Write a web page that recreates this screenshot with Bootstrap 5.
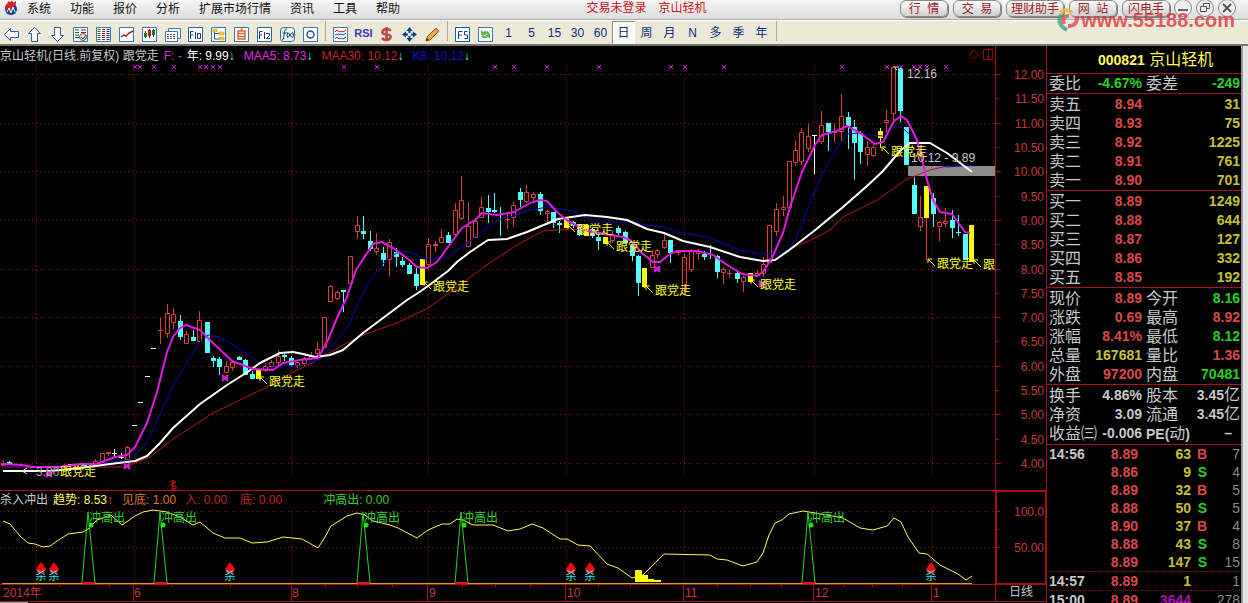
<!DOCTYPE html>
<html lang="zh-CN">
<head>
<meta charset="utf-8">
<meta name="viewport" content="width=device-width, initial-scale=1">
<title>京山轻机 000821</title>
<link href="https://cdn.jsdelivr.net/npm/bootstrap@5.3.0/dist/css/bootstrap.min.css" rel="stylesheet">
<style>
body{font-family:"Liberation Sans","Noto Sans CJK SC",sans-serif;font-size:12px;line-height:16px;background:#000;color:#c8c8c8}
.menubar{height:20px;background:linear-gradient(#f6f6f6,#dcdcdc);border-bottom:1px solid #aaa;padding:0 10px 2px 4px}
.menubar nav{gap:19px;margin-left:8px}
.menubar nav a{color:#111}
.login{left:47%;gap:12px;top:0}
.login a{color:#c8141c}
.pills{gap:5px;margin-right:2px}
.pill{height:17px;min-width:48px;border:1px solid #8c8c8c;border-radius:6px;background:linear-gradient(#fdfdfd,#cfcfcf);color:#9c1c24;font-size:12px;line-height:14px;padding:0 4px;box-shadow:1px 1px 0 #777;white-space:pre}
.winbtn{width:22px;height:19px;padding:0;border:0;background:none;line-height:0}
.toolbar{height:26px;background:#ece9d8;border-top:1px solid #fff;border-bottom:2px solid #77766c}
.tool{width:23px;height:23px;border:0;background:none;padding:0;color:#0c2c80;font-size:12px;line-height:22px;text-align:center}
.tool svg{display:block;margin:3px auto 0}
.tool.pressed{background:#fbfaf6;border:1px solid;border-color:#908d7c #fff #fff #908d7c}
.tool.rsi{color:#3838c0;font-size:11px;font-weight:700}
.rule{width:8px;height:20px;border-left:1px solid #aaa792;margin-left:3px;margin-right:-4px}
.mark-site{right:13px;top:6px;color:rgba(222,50,55,.8);font-size:20px;line-height:28px;z-index:5;pointer-events:none}
.legend{gap:9px;white-space:nowrap;line-height:16px}
.legend .near{margin-left:-4px}
.cy{color:#54fcfc}.wh{color:#fff}.mg{color:#e428e4}.rd{color:#c02424}.bl{color:#1414c8}.yl{color:#fcfc54}.gn{color:#30d030}.og{color:#e07830}
.side{width:195px;border-left:1px solid #a81414}
.edge{width:7px;background:#e4e4e4;border-left:2px solid #999}
.side h1{height:28px;font-size:16px;line-height:27px;color:#fcfc54;border-bottom:1px solid #a81414;padding-left:51px}
.side h1 b{font-size:14px}
.quote{width:191px;table-layout:fixed;margin-left:2px;font-size:16px;line-height:19px;color:#c8c8c8;border-collapse:collapse}
.quote th{font-weight:400;padding:0;height:19px;white-space:nowrap}
.quote td{padding:0;height:19px;font-size:14px;font-weight:700;text-align:right;white-space:nowrap}
.quote td.kj{font-weight:400;font-size:16px;text-align:left}
.quote td b{font-size:14px}
.quote td b,.quote td span{line-height:14px}
.quote.ticks,.quote.ticks td,.quote.ticks th{height:18px;line-height:18px;font-size:14px}
.quote.ticks th{font-weight:700}
.quote.ticks tr.dots>*{border-top:1px dotted #8c1414}
.group{border-bottom:1px solid #a81414}
.group+.group{padding-top:1px}
.group.fund{padding-bottom:1px}
.up{color:#dc4848}.dn{color:#28d028}.vol{color:#c4c030}.ct{color:#888!important;font-weight:400!important}.big{color:#b010b0}
.chart svg{display:block;width:100%;height:auto}
svg text{font-family:"Liberation Sans","Noto Sans CJK SC",sans-serif;font-size:12px}
</style>
</head>
<body class="vh-100 overflow-hidden d-flex flex-column position-relative">

<header class="menubar d-flex align-items-center flex-shrink-0 position-relative">
  <svg width="15" height="18" viewBox="0 0 15 18"><circle cx="7" cy="9" r="6" fill="#143c9c"/><path d="M1 9a6 6 0 0 1 9-6l2 2-4 2 3 2-5 2-1-3z" fill="#e02020"/><path d="M3 3l2-2 1 2 2-3 1 3 3-2v3z" fill="#e02020"/><path d="M3 12l2-4 2 5 2-6 2 5" stroke="#fff" fill="none"/></svg>
  <nav class="d-flex">
    <a class="text-decoration-none" href="#">系统</a><a class="text-decoration-none" href="#">功能</a><a class="text-decoration-none" href="#">报价</a><a class="text-decoration-none" href="#">分析</a><a class="text-decoration-none" href="#">扩展市场行情</a><a class="text-decoration-none" href="#">资讯</a><a class="text-decoration-none" href="#">工具</a><a class="text-decoration-none" href="#">帮助</a>
  </nav>
  <div class="login position-absolute d-flex"><a class="text-decoration-none" href="#">交易未登录</a><a class="text-decoration-none" href="#">京山轻机</a></div>
  <div class="pills ms-auto d-flex align-items-center">
    <button class="pill">行  情</button><button class="pill">交  易</button><button class="pill">理财助手</button><button class="pill">网  站</button><button class="pill">闪电手</button>
  </div>
  <div class="d-flex">
    <button class="winbtn" aria-label="最小化"><svg width="20" height="19"><circle cx="10" cy="9" r="8.500" fill="#eee" stroke="#888"/><path d="M5 11h10" stroke="#666" stroke-width="2"/></svg></button>
    <button class="winbtn" aria-label="还原"><svg width="20" height="19"><circle cx="10" cy="9" r="8.500" fill="#eee" stroke="#888"/><path d="M8.500 7.500v-3h6v5h-3M5.500 7.500h6v5h-6z" fill="none" stroke="#555"/></svg></button>
    <button class="winbtn" aria-label="关闭"><svg width="20" height="19"><circle cx="10" cy="9" r="8.500" fill="#eee" stroke="#888"/><path d="M6 5l8 8M14 5l-8 8" stroke="#555" stroke-width="2"/></svg></button>
  </div>
</header>

<div class="toolbar d-flex flex-shrink-0" role="toolbar">
  <button class="tool" aria-label="后退"><svg width="17" height="17"><path d="M1.500 8.500l6-6v3h8v6h-8v3z" fill="#fff" stroke="#2c5ca8"/></svg></button>
  <button class="tool" aria-label="上"><svg width="17" height="17"><path d="M8.500 1.500l6 6h-3v8h-6v-8h-3z" fill="#fff" stroke="#2c5ca8"/></svg></button>
  <button class="tool" aria-label="下"><svg width="17" height="17"><path d="M8.500 15.500l6-6h-3v-8h-6v8h-3z" fill="#fff" stroke="#2c5ca8"/></svg></button>
  <button class="tool" aria-label="报告"><svg width="17" height="17"><path d="M1.500 1.500h14v14h-14z" fill="#fff" stroke="#3c78b8"/><path d="M3 4h4M3 6.500h4M3 9h4" stroke="#086808"/><path d="M9 4h5M9 6.500h5" stroke="#a01818"/><path d="M3 11.500h4" stroke="#444"/><circle cx="11" cy="11" r="3.500" fill="#ddd" stroke="#666"/><path d="M9 11l2 2 3-4" stroke="#555" fill="none"/></svg></button>
  <button class="tool" aria-label="列表"><svg width="17" height="17"><path d="M1.500 1.500h14v14h-14z" fill="#fff" stroke="#3c78b8"/><path d="M4 3v12" stroke="#067006" stroke-width="3" stroke-dasharray="1 1"/><path d="M8.500 3v12" stroke="#c01010" stroke-width="3" stroke-dasharray="1 1"/><path d="M13 3v12" stroke="#103090" stroke-width="3" stroke-dasharray="1 1"/></svg></button>
  <button class="tool" aria-label="分时"><svg width="17" height="17"><path d="M1.500 1.500h14v14h-14z" fill="#fff" stroke="#3c78b8"/><path d="M3 11l3-2 2 1 3-3 4-2" fill="none" stroke="#c01818" stroke-width="1.500"/></svg></button>
  <button class="tool" aria-label="K线"><svg width="17" height="17"><path d="M1.500 1.500h14v14h-14z" fill="#fff" stroke="#3c78b8"/><path d="M4.500 5v7M8.500 3v9M12.500 3v8" stroke="#333"/><path d="M3 7h3v4H3z" fill="#108010"/><path d="M7 4h3v6H7z" fill="#d01010"/><path d="M11 4h3v5h-3z" fill="#108010"/></svg></button>
  <button class="tool" aria-label="窗口"><svg width="17" height="17"><path d="M4.500 2.500h12v10h-12z" fill="#fff" stroke="#3c78b8"/><path d="M1.500 5.500h12v10h-12z" fill="#fff" stroke="#3c78b8"/><path d="M3 8.500h9M3 10.500h9M3 12.500h9" stroke="#555" stroke-dasharray="2 1"/></svg></button>
  <button class="tool" aria-label="F10"><svg width="17" height="17"><path d="M1.500 1.500h14v14h-14z" fill="#fff" stroke="#2c64a8"/><path d="M3.500 13V5.500h3M3.500 9H6M8.500 6v7M10.500 7.500h3v5h-3z" fill="none" stroke="#1c3c94"/></svg></button>
  <button class="tool" aria-label="树"><svg width="17" height="17"><path d="M1.500 1.500h14v14h-14z" fill="#fff" stroke="#3c78b8"/><path d="M4.500 5v8h6M4 7.500h6" fill="none" stroke="#2c5ca8"/><path d="M3 3h4v3H3zM9 6h5v3H9zM9 11h5v3H9z" fill="#f4c840" stroke="#c88c20" stroke-width=".5"/></svg></button>
  <button class="tool" aria-label="自选"><svg width="17" height="17"><path d="M1.500 1.500h14v14h-14z" fill="#fff" stroke="#3c78b8"/><path d="M5 5h7v8H5zM5 7.500h7M5 10.500h7M9 2L8 5" fill="none" stroke="#e06828" stroke-width="1.500"/></svg></button>
  <button class="tool" aria-label="F12"><svg width="17" height="17"><path d="M1.500 1.500h14v14h-14z" fill="#fff" stroke="#2c64a8"/><path d="M3.500 13V5.500h3M3.500 9H6M8.500 6v7M10 7.500h3.500v2L10.500 12.500H14" fill="none" stroke="#1c3c94"/></svg></button>
  <button class="tool" aria-label="公式"><svg width="17" height="17"><rect x="1.500" y="1.500" width="14" height="14" rx="3" fill="#eef6f4" stroke="#2c7878"/><path d="M8 3q-2-1-2.500 3l-1 7q-.5 1-1.500 0M3.500 7h4M9 6q-2 3 0 6M13.500 6q2 3 0 6M9.500 7l3 4M12.500 7l-3 4" fill="none" stroke="#1c4878"/></svg></button>
  <button class="tool" aria-label="圆"><svg width="17" height="17"><path d="M1.500 1.500h14v14h-14z" fill="#fff" stroke="#3c78b8"/><circle cx="8.500" cy="8.500" r="3.500" fill="none" stroke="#1c5c94" stroke-width="1.500"/></svg></button>
  <span class="rule"></span>
  <button class="tool" aria-label="叠加"><svg width="17" height="17"><path d="M1.500 1.500h14v14h-14z" fill="#fff" stroke="#3c78b8"/><path d="M3 6l2-2 2 2 2-1 2 1 3-2" fill="none" stroke="#c01818"/><path d="M3 9l2-1 2 1 2-1 2 1 3-2M3 13l2-2 2 2 2-1 2 1 3-2" fill="none" stroke="#2848a8"/></svg></button>
  <button class="tool rsi">RSI</button>
  <button class="tool" aria-label="资金"><svg width="17" height="17"><path d="M12.500 5q-1-2-4-2t-4 2.500 4 3 4 3-4 2.500-4.500-2M8.500 1v14" fill="none" stroke="#b84840" stroke-width="2.500"/></svg></button>
  <button class="tool" aria-label="移动"><svg width="17" height="17"><path d="M8.500 1l3 4h-6zM8.500 16l3-4h-6zM1 8.500l4-3v6zM16 8.500l-4-3v6z" fill="#0c3c94"/><path d="M8.500 4v9M4 8.500h9" stroke="#0c3c94" stroke-width="2"/><path d="M7 7h3v3H7z" fill="#e8eefc"/></svg></button>
  <button class="tool" aria-label="画线"><svg width="17" height="17"><path d="M2 15l1-4L12 2l3 3-9 9z" fill="#f0a840" stroke="#905818"/><path d="M11 3l1-1 3 3-1 1z" fill="#e87878"/><path d="M2 15l1-3 2 2z" fill="#333"/></svg></button>
  <span class="rule"></span>
  <button class="tool" aria-label="F5"><svg width="17" height="17"><path d="M1.500 1.500h14v14h-14z" fill="#fff" stroke="#0c64a8"/><path d="M4.500 13V5.500h4M4.500 9H8M13.500 5.500h-3V9h3v3.500h-3" fill="none" stroke="#1c3c94"/></svg></button>
  <button class="tool" aria-label="刷新"><svg width="17" height="17"><path d="M1.500 1.500h14v14h-14z" fill="#fff" stroke="#3c78b8"/><path d="M4 9V4l2 2q4-3 7 2l-2 1Q9 7 8 8l1 1zM13 8v5l-2-2q-4 3-7-1l2-1q2 2 3 1L8 9z" fill="#58b848"/></svg></button>
  <button class="tool">1</button><button class="tool">5</button><button class="tool">15</button><button class="tool">30</button><button class="tool">60</button><button class="tool pressed">日</button><button class="tool">周</button><button class="tool">月</button><button class="tool">N</button><button class="tool">多</button><button class="tool">季</button><button class="tool">年</button>
  <span class="rule"></span>
</div>

<div class="mark-site position-absolute d-flex fw-bold">
  <svg width="26" height="28" viewBox="0 0 26 28" fill="none" stroke-width="4" opacity=".8"><path d="M5 7q6-6 12 0" stroke="#f0b838"/><path d="M6 9q-5 9 6 15" stroke="#38a878"/><path d="M9 18q-3-8 5-8M13 20q10 0 9-10" stroke="#e04850"/></svg>
  <span>www.55188.com</span>
</div>

<main class="d-flex flex-grow-1 overflow-hidden">
  <div class="chart flex-grow-1 overflow-hidden">
    <section class="position-relative">
      <div class="legend position-absolute top-0 start-0 d-flex mt-1 lh-1">
        <span>京山轻机(日线.前复权) 跟党走</span><span class="mg near">F: -</span><span class="wh near">年: 9.99<span class="cy">↓</span></span><span class="mg">MAA5: 8.73<span class="cy">↓</span></span><span class="rd">MAA30: 10.12<span class="cy">↓</span></span><span class="bl">K8: 10.12<span class="cy">↓</span></span>
      </div>
      <svg id="kline" viewBox="0 46 1046 444" role="img" aria-label="日K线">
        <g id="grid" fill="none" stroke="#9c1010" stroke-dasharray="1 3"></g>
        <path d="M995.500 46v444" stroke="#a01010" fill="none"/>
        <path d="M974 50l4.500 4.500-4.500 4.500-4.500-4.500zM983.500 49.500h9v10h-9zM988.500 49.500v10" fill="none" stroke="#900"/>
        <g id="scale" fill="#c83838" text-anchor="end"></g>
        <path d="M908 166h87v10h-87z" fill="#8c8c8c"/>
        <g id="candles"></g>
        <g fill="none" stroke-linejoin="round">
          <path stroke="#b81810" d="M2 467L127 467 135 463 150 457 173 439 213 413 240 400 267 387 293 372 312 363 343 345 363 335 397 323 428 308 453 290 488 264 517 245 543 231 570 229 600 231"/>
          <path stroke="#b81810" d="M783 252L807 242 830 230 843 217 877 200 907 179 930 170 947 166"/>
          <path stroke="#0808b8" d="M3 466L50 467 100 463 128 460 137 453 147 443 158 418 172 388 187 362 200 342 208 335 220 337 233 345 260 363 273 366 300 366 317 360 327 352 340 337 350 323 356 307 370 280 388 258 397 253 408 251 423 259 448 257 460 248 475 237 488 227 503 218 514 216 527 211 547 207 573 211 597 223 617 222 630 222 657 227 664 227 678 232 707 237 740 250 760 254 777 254 788 250 797 237 810 203 823 172 837 148 847 134 857 133 870 135 883 136 893 128 901 127 907 132 920 143 937 164 947 167 972 165"/>
          <path stroke="#fff" stroke-width="2" d="M3 471L50 471 80 468 110 464 135 461 147 456 160 443 173 428 200 404 227 385 246 373 260 363 280 353 293 352 303 354 315 357 330 355 343 350 363 333 383 318 407 300 418 293 428 286 448 271 457 262 470 252 488 240 507 239 527 232 558 219 585 215 607 217 627 220 647 229 664 233 683 241 710 247 740 257 763 261 775 260 788 251 814 231 843 207 867 186 882 172 901 150 910 143 930 143 947 153 972 172"/>
          <path stroke="#e418e4" stroke-width="2" d="M2 464L22 465 32 467 60 467 80 464 97 464 115 457 127 455 135 447 147 423 157 392 167 352 173 337 180 328 186 325 200 330 213 343 232 361 253 369 273 370 283 363 300 360 318 358 328 340 337 318 347 297 356 270 373 244 382 242 393 248 407 258 417 267 427 268 437 262 448 247 462 228 475 220 482 213 497 215 514 212 530 203 540 200 547 201 557 212 568 221 587 231 610 235 623 237 630 240 642 253 653 262 660 262 670 254 677 251 697 251 713 255 727 265 742 274 757 276 763 272 772 258 783 233 790 207 802 172 815 145 822 135 837 131 847 126 860 133 875 144 883 142 894 121 901 116 907 120 917 140 927 180 933 200 940 212 952 214 965 232 970 233"/>
        </g>
        <g id="crosses" stroke="#d818d8" fill="none"></g>
        <path d="M894 67h5M894 67l3 3M22 471l5-3M22 471l5 3" stroke="#ddd" fill="none"/>
        <text x="907" y="78" fill="#c8c8c8">12.16</text><text x="911" y="162" fill="#c8c8c8">10.12 - 9.89</text><text x="36" y="476" fill="#aaa">3.80</text>
        <g id="follow" fill="#fcfc20"></g>
        <path d="M170 482l3-2 3 2M176 483h-4v3h4v3h-5M173 481v9" stroke="#e01818" fill="none"/>
      </svg>
    </section>
    <section class="position-relative">
      <div class="legend position-absolute top-0 start-0 d-flex mt-1 lh-1">
        <span>杀入冲出</span><span class="yl near">趋势: 8.53<span class="up">↑</span></span><span class="og">见底: 1.00</span><span class="rd near ps-1">入: 0.00</span><span class="rd ms-1">底: 0.00</span><span class="gn ms-4 ps-2">冲高出: 0.00</span>
      </div>
      <svg id="trend" viewBox="0 490 1046 113" role="img" aria-label="趋势指标">
        <path d="M0 490.500h1046" stroke="#b01010"/>
        <path d="M36.500 510v73M134.500 510v73M291.500 510v73M428.500 510v73M566.500 510v73M684.500 510v73M814.500 510v73M932.500 510v73M0 511.500h996M0 547.500h996" stroke="#9c1010" stroke-dasharray="1 3"/>
        <path d="M996 491h50v93h-50z" fill="none" stroke="#a80c10" stroke-width="2"/>
        <path d="M0 584.500h996M0 601.500h1046M995.500 585v17M133.500 584v17M291.500 584v17M427.500 584v17M565.500 584v17M683.500 584v17M813.500 584v17M931.500 584v17M60.500 584v3M109.500 584v3M172.500 584v3M230.500 584v3M325.500 584v3M357.500 584v3M392.500 584v3M462.500 584v3M495.500 584v3M530.500 584v3M598.500 584v3M630.500 584v3M717.500 584v3M750.500 584v3M781.500 584v3M843.500 584v3M872.500 584v3M902.500 584v3M996 511.500h4M996 529.500h3M996 547.500h4" stroke="#b01010" fill="none"/>
        <path d="M2 583.500h970" stroke="#c8b000"/>
        <path d="M0 602h28v1H0z" fill="#999"/>
        <path fill="none" stroke="#fcfc54" d="M3 521L10 524 20 536 28 543 35 544 43 547 50 546 57 541 68 534 83 532 88 529 97 520 111 515 122 525 135 516 143 512 153 510 167 512 180 517 193 525 200 522 213 533 225 538 240 538 252 543 267 542 283 537 302 539 318 548 325 537 331 526 347 516 357 513 365 515 373 521 390 525 398 528 417 538 428 530 442 524 450 524 457 519 463 520 473 525 493 525 508 531 520 529 532 524 543 528 560 539 567 539 578 545 590 546 607 564 618 568 632 578 643 575 655 563 664 554 710 555 717 559 727 560 743 566 757 562 763 553 769 535 775 523 782 520 789 514 803 511 827 515 843 518 860 528 873 530 887 526 894 518 901 522 908 537 919 553 927 554 940 565 958 574 966 580 972 576"/>
        <path d="M635 570h7v5h6v4h6v1h7v2h-26z" fill="#fcfc00"/>
        <g id="signals"></g>
        <g fill="#c83838"><g text-anchor="end"><text x="1044" y="516">100.0</text><text x="1044" y="552">50.00</text></g>
        <text x="3" y="597">2014年</text><text x="134" y="597">6</text><text x="292" y="597">8</text><text x="429" y="597">9</text><text x="567" y="597">10</text><text x="685" y="597">11</text><text x="815" y="597">12</text><text x="933" y="597">1</text></g>
        <text x="1009" y="596" fill="#c8c8c8">日线</text>
      </svg>
    </section>
  </div>

  <aside class="side flex-shrink-0 overflow-hidden">
    <h1 class="mb-0 fw-normal"><b>000821</b> 京山轻机</h1>
    <div class="group"><table class="quote"><colgroup><col style="width:34px"><col style="width:59px"><col style="width:36px"><col></colgroup>
      <tr><th>委比</th><td class="dn">-4.67%</td><td class="kj ps-1">委差</td><td class="dn">-249</td></tr></table></div>
    <div class="group"><table class="quote"><colgroup><col style="width:34px"><col style="width:59px"><col></colgroup>
      <tr><th>卖五</th><td class="up">8.94</td><td class="vol">31</td></tr><tr><th>卖四</th><td class="up">8.93</td><td class="vol">75</td></tr><tr><th>卖三</th><td class="up">8.92</td><td class="vol">1225</td></tr><tr><th>卖二</th><td class="up">8.91</td><td class="vol">761</td></tr><tr><th>卖一</th><td class="up">8.90</td><td class="vol">701</td></tr></table></div>
    <div class="group"><table class="quote"><colgroup><col style="width:34px"><col style="width:59px"><col></colgroup>
      <tr><th>买一</th><td class="up">8.89</td><td class="vol">1249</td></tr><tr><th>买二</th><td class="up">8.88</td><td class="vol">644</td></tr><tr><th>买三</th><td class="up">8.87</td><td class="vol">127</td></tr><tr><th>买四</th><td class="up">8.86</td><td class="vol">332</td></tr><tr><th>买五</th><td class="up">8.85</td><td class="vol">192</td></tr></table></div>
    <div class="group"><table class="quote"><colgroup><col style="width:34px"><col style="width:59px"><col style="width:36px"><col></colgroup>
      <tr><th>现价</th><td class="up">8.89</td><td class="kj ps-1">今开</td><td class="dn">8.16</td></tr><tr><th>涨跌</th><td class="up">0.69</td><td class="kj ps-1">最高</td><td class="up">8.92</td></tr><tr><th>涨幅</th><td class="up">8.41%</td><td class="kj ps-1">最低</td><td class="dn">8.12</td></tr><tr><th>总量</th><td class="vol">167681</td><td class="kj ps-1">量比</td><td class="up">1.36</td></tr><tr><th>外盘</th><td class="up">97200</td><td class="kj ps-1">内盘</td><td class="dn">70481</td></tr></table></div>
    <div class="group fund"><table class="quote"><colgroup><col style="width:48px"><col style="width:45px"><col style="width:48px"><col></colgroup>
      <tr><th>换手</th><td>4.86%</td><td class="kj ps-1">股本</td><td>3.45<span class="fw-normal fs-6">亿</span></td></tr><tr><th>净资</th><td>3.09</td><td class="kj ps-1">流通</td><td>3.45<span class="fw-normal fs-6">亿</span></td></tr><tr><th>收益㈢</th><td>-0.006</td><td class="kj ps-1"><b>PE(</b>动<b>)</b></td><td class="pe-2">–</td></tr></table></div>
    <table class="quote ticks"><colgroup><col style="width:40px"><col style="width:49px"><col style="width:53px"><col style="width:16px"><col></colgroup>
      <tr><th>14:56</th><td class="up">8.89</td><td class="vol">63</td><td class="up">B</td><td class="ct">7</td></tr>
      <tr><th></th><td class="up">8.86</td><td class="vol">9</td><td class="dn">S</td><td class="ct">4</td></tr>
      <tr><th></th><td class="up">8.89</td><td class="vol">32</td><td class="up">B</td><td class="ct">5</td></tr>
      <tr><th></th><td class="up">8.88</td><td class="vol">50</td><td class="dn">S</td><td class="ct">5</td></tr>
      <tr><th></th><td class="up">8.90</td><td class="vol">37</td><td class="up">B</td><td class="ct">4</td></tr>
      <tr><th></th><td class="up">8.88</td><td class="vol">43</td><td class="dn">S</td><td class="ct">8</td></tr>
      <tr><th></th><td class="up">8.89</td><td class="vol">147</td><td class="dn">S</td><td class="ct">15</td></tr>
      <tr class="dots"><th>14:57</th><td class="up">8.89</td><td class="vol">1</td><td></td><td class="ct">1</td></tr>
      <tr class="dots"><th>15:00</th><td class="up">8.89</td><td class="big">3644</td><td></td><td class="ct">278</td></tr></table>
  </aside>
  <div class="edge flex-shrink-0"></div>
</main>

<script src="https://cdn.jsdelivr.net/npm/bootstrap@5.3.0/dist/js/bootstrap.bundle.min.js"></script>
<script>
const put = (id, html) => document.getElementById(id).innerHTML = html;

// price scale: 12.00 sits at y 74, one yuan is about 48.6 units
const yOf = p => Math.round(74 + (12 - p) * 48.63);
let grid = '', scale = '';
for (let p = 12; p >= 4; p -= 0.5) {
  const y = yOf(p);
  if (p % 1 === 0) grid += `<path d="M0 ${y}.5H996"/>`;
  scale += `<text x="1044" y="${y + 5}">${p.toFixed(2)}</text><path stroke="#a01010" d="M996 ${y}.5h${p % 1 ? 3 : 5}"/>`;
}
[36,134,291,428,566,684,814,932].forEach(x => grid += `<path d="M${x}.5 66V475"/>`);
put('grid', grid); put('scale', scale);

// x, high, body top, body bottom, low, kind
const bars = `3,460,463,465,465,r 9,461,462,464,464,c 64,464,465,466,466,r 70,464,464,466,466,w 84,464,465,466,466,c 95,459,461,465,466,r 102,453,453,461,461,r 108,452,452,454,456,R 114,449,453,454,458,w 121,453,457,458,459,w 127,446,447,459,459,r
134,425,425,426,426,w 140,402,402,403,403,w 147,376,376,377,377,w 153,348,348,349,349,w 160,318,330,331,344,r 167,304,313,333,338,r 173,308,314,322,329,r 180,315,321,337,340,c 186,331,334,343,343,r 193,330,337,341,341,c 199,311,320,341,341,r 207,322,322,353,353,c 213,356,358,361,367,c 219,357,359,367,375,c 226,361,366,372,372,r 232,360,362,367,371,r 239,356,357,360,360,c 245,359,360,375,375,c 252,371,374,379,379,c 258,369,369,379,379,y 265,363,366,370,372,r 271,360,362,366,366,r 278,350,356,362,366,r 284,353,355,357,361,c 291,356,358,365,367,c 297,360,362,365,368,r 304,357,358,363,366,r 311,352,355,358,360,r 317,342,349,353,358,r 324,317,317,347,347,r
330,285,286,301,302,r 337,291,292,298,300,r 343,290,290,292,312,c 350,256,256,283,283,r 357,216,225,231,239,r 363,216,231,234,239,c 370,231,241,249,251,c 376,233,248,251,255,r 383,247,253,260,266,c 389,239,242,259,276,r 396,248,252,257,267,c 402,257,261,265,267,c 409,263,265,274,274,c 416,268,274,286,290,c 422,259,259,285,285,y 428,238,244,264,266,r 435,241,244,246,252,R 441,229,237,242,243,r 448,232,235,243,243,c 455,203,210,234,238,r 461,176,200,218,220,r 468,202,226,246,246,r 475,218,221,237,237,r 481,197,207,217,218,r 488,195,208,212,223,c 494,193,210,212,213,c 500,207,214,215,236,c 507,214,219,220,229,r 513,202,205,217,227,r 520,188,192,200,207,c 526,185,192,201,203,r 533,192,194,197,203,r 540,192,194,211,215,c 547,210,211,213,223,r 553,212,212,223,228,c 559,221,223,225,233,c 566,219,219,228,228,y 573,221,222,226,228,c 579,224,224,235,236,c 586,225,225,236,236,y 592,228,229,236,238,c 598,235,237,241,250,c 605,237,237,244,244,y 612,231,234,240,243,r 618,226,228,233,235,c 625,231,232,243,243,c 632,243,245,256,261,c 638,255,256,283,296,c
644,268,268,287,288,y 652,250,255,267,268,r 657,249,250,254,258,r 664,234,240,247,249,r 670,240,240,253,263,c 678,250,252,253,255,r 684,253,257,290,292,r 691,249,251,269,272,r 698,249,251,253,260,r 704,251,254,257,260,c 710,245,254,255,259,c 717,255,256,272,278,c 723,267,269,272,284,r 729,270,273,274,278,r 737,270,273,279,283,c 743,276,277,281,292,r 750,273,273,282,282,y 757,270,273,275,277,r 763,257,264,273,277,r 769,225,225,262,262,r 776,203,209,231,236,r 783,196,207,209,216,r 789,161,161,207,207,r 795,140,150,162,166,r 801,128,132,161,165,r 808,124,136,148,152,r 814,135,135,136,174,w 821,111,125,141,144,r 828,123,123,132,151,c 834,123,131,133,142,R 841,94,116,131,142,r 848,112,117,126,149,c 854,120,127,143,180,c 860,131,133,152,164,c 867,141,147,154,166,r 873,144,147,155,157,r 880,128,131,138,148,y 886,110,120,122,132,r 893,66,67,113,120,r 900,67,68,111,122,c 906,127,127,165,165,c 914,177,185,214,214,c 920,196,217,226,231,r 926,186,186,218,260,y 933,193,198,214,227,c 939,221,222,226,241,r 945,208,221,223,227,r 952,210,220,228,238,c 958,215,232,233,236,c 965,234,234,260,260,c 971,225,225,262,262,y`;
const tint = {r:'#d84038', R:'#d84038', c:'#54fcfc', y:'#fcfc00', w:'#fff'};
put('candles', bars.split(/\s+/).map(row => {
  const [x, hi, top, bot, lo, kind] = row.split(',');
  const col = tint[kind], tall = bot - top;
  const wick = kind === 'y' && x === '926' ? tint.r : col;
  const body = kind === 'r' && tall > 1
    ? `<path d="M${x - 2}.500 ${top}.500h4v${tall}h-4z" fill="none" stroke="${col}"/>`
    : `<path d="M${x - 2} ${top}h5v${tall}h-5z" fill="${col}"/>`;
  return `<path d="M${x}.500 ${hi}V${top}M${x}.500 ${bot}V${lo}" stroke="${wick}"/>${body}`;
}).join(''));

const small = (x, y) => `<path d="M${x-2} ${y-2}l4 4M${x+2} ${y-2}l-4 4"/>`;
const star = (x, y) => `<path stroke-width="2" d="M${x-3} ${y-3}l6 6M${x+3} ${y-3}l-6 6M${x-3} ${y}h6"/>`;
put('crosses', [135,140,154,174,200,206,213,220,344,377,495,514,547,599,671,685,724,842,887,901,914,920,927,946].map(x => small(x, 67)).join('')
  + [[49,474],[127,466],[225,378],[657,269],[762,284]].map(p => star(...p)).join(''));

const tags = [[60,472],[269,382],[433,287],[577,230],[616,247],[655,291],[760,285],[891,152],[937,264],[983,265,'跟']];
put('follow', tags.map(([x, y, t], i) => `<text x="${x}" y="${y + 4}">${t || '跟党走'}</text>` +
  (i ? `<path fill="none" stroke="#fcfc20" d="M${x - 2} ${y + 2}l-7-7m0 4v-4h4"/>` : '')).join(''));

// spikes with their labels, then flame markers
put('signals', [88,160,363,461,808].map(x => `<path d="M${x-6} 583L${x} 512L${x+7} 583" fill="none" stroke="#30d030"/><path d="M${x-6} 583h13" stroke="#f01010" stroke-width="2"/><circle cx="${x+3}" cy="525" r="2.500" fill="#10f010"/><text x="${x+1}" y="522" fill="#30d030">冲高出</text>`).join('')
  + [41,54,230,571,590,931].map(x => `<path d="M${x} 562l5 7-2 4h-6l-2-4z" fill="#f80808"/><text x="${x}" y="580" fill="#40e0e0" text-anchor="middle" style="font-size:11px">杀</text>`).join(''));
</script>
</body>
</html>
